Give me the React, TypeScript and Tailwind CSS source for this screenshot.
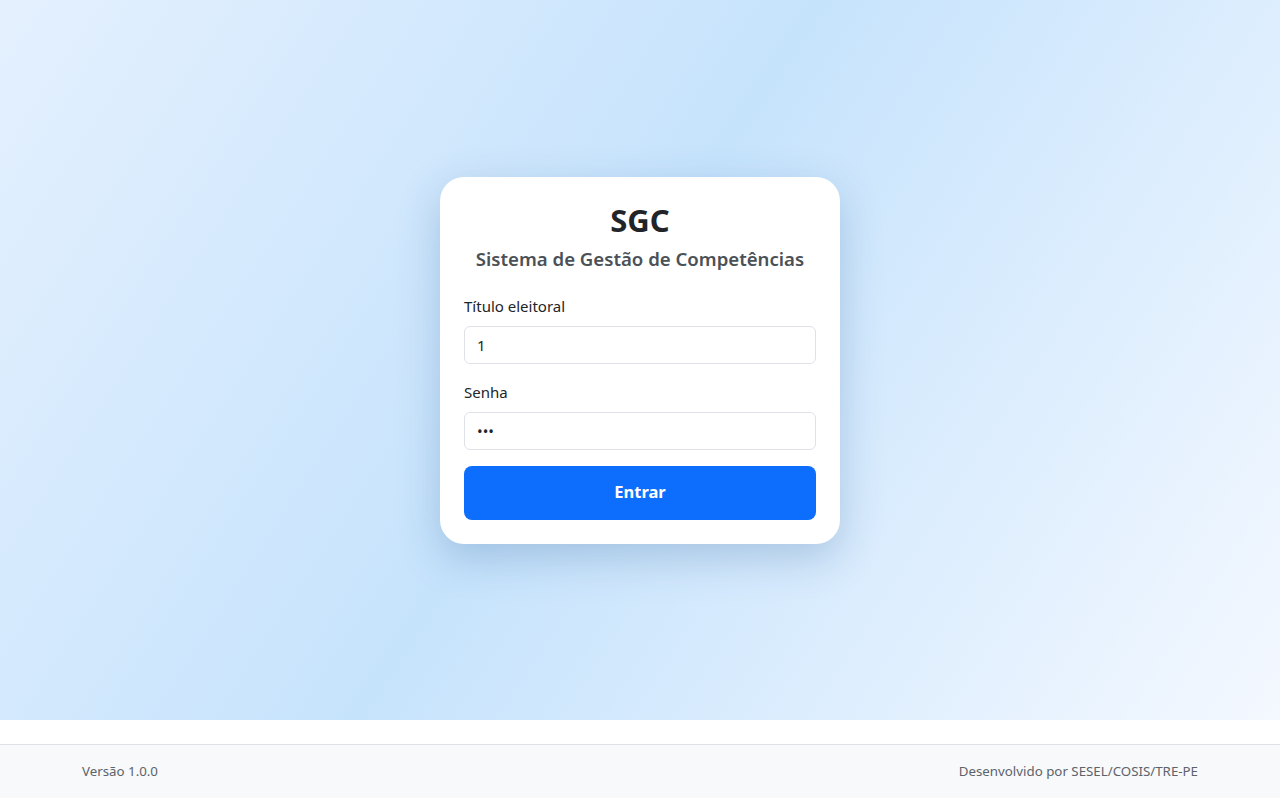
import React, {useState} from 'react'

const App: React.FC = () => {
  const [titulo, setTitulo] = useState('1')
  const [senha, setSenha] = useState('123')

  return (
    <div className="min-h-screen bg-white font-['Noto_Sans',sans-serif] text-[#212529]">
      <main className="h-[720px] flex items-center justify-center bg-[linear-gradient(123deg,#e4f0fe_0%,#c6e3fc_47%,#f4f8ff_100%)]">
        <div className="w-[400px] bg-white rounded-3xl p-6 shadow-[0_14px_40px_rgba(40,90,150,0.25)]">
          <h1 className="text-[31px] leading-[38px] font-bold text-center text-[#212529] mb-2">
            SGC
          </h1>
          <h2 className="text-[18.6px] leading-6 font-semibold text-center text-[#4b5157] whitespace-nowrap mb-[23px]">
            Sistema de Gestão de Competências
          </h2>

          <form onSubmit={(e) => e.preventDefault()}>
            <label className="block text-[15px] leading-6 mb-2">Título eleitoral</label>
            <input
              value={titulo}
              onChange={(e) => setTitulo(e.target.value)}
              className="block w-full h-[38px] px-3 text-[15px] border border-[#dee2e6] rounded-md outline-none mb-4"
            />

            <label className="block text-[15px] leading-6 mb-2">Senha</label>
            <input
              type="password"
              value={senha}
              onChange={(e) => setSenha(e.target.value)}
              className="block w-full h-[38px] px-3 text-[15px] border border-[#dee2e6] rounded-md outline-none mb-4"
            />

            <button
              type="submit"
              className="block w-full h-[54px] bg-[#0d6efd] text-white text-[16.5px] font-bold rounded-lg"
            >
              Entrar
            </button>
          </form>
        </div>
      </main>

      <footer className="mt-6 border-t border-[#dee2e6] bg-[#f8f9fa] py-4">
        <div className="flex justify-between px-[82px] text-[13.3px] leading-[21px] text-[#5c636a]">
          <span>Versão 1.0.0</span>
          <span>Desenvolvido por SESEL/COSIS/TRE-PE</span>
        </div>
      </footer>
    </div>
  )
}

export default App
